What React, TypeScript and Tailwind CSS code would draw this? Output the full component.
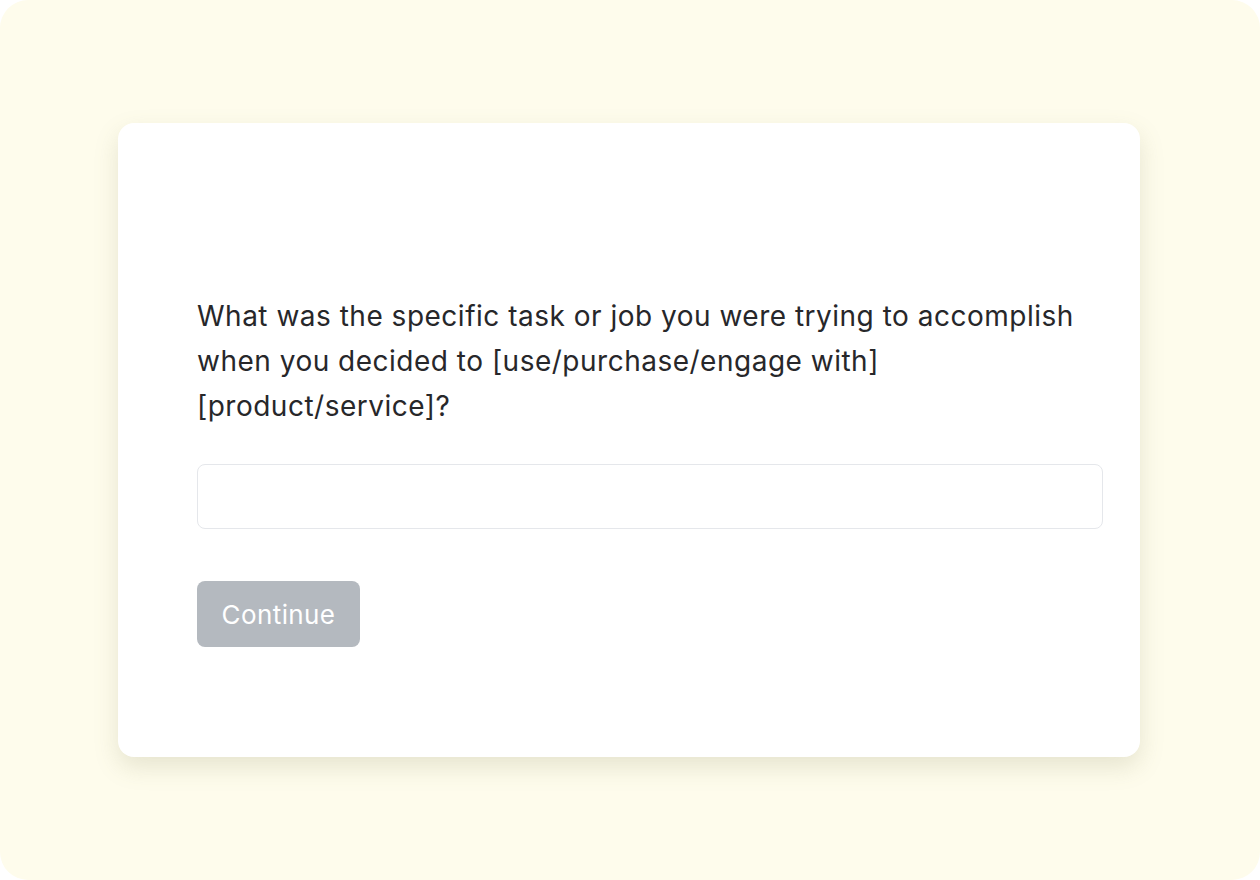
import React, { useState } from 'react';

// Survey question card
export default function App() {
  const [answer, setAnswer] = useState('');

  return (
    <div className="w-[1260px] h-[880px] bg-[#fefcec] rounded-[28px] overflow-hidden font-['Inter',sans-serif] pt-[123px] pl-[118px]">
      <div className="w-[1022px] h-[634px] bg-white rounded-[16px] shadow-[0_10px_24px_rgba(120,120,80,0.18)] pl-[79px] pt-[171px]">
        <p className="w-[905px] text-[28px] leading-[45px] tracking-[0.5px] text-[#27272a]">
          What was the specific task or job you were trying to accomplish when you decided to [use/purchase/engage with] [product/service]?
        </p>
        <input
          value={answer}
          onChange={(e) => setAnswer(e.target.value)}
          className="mt-[35px] block w-[906px] h-[65px] rounded-[8px] border border-[#e5e7eb] px-4 text-[22px] outline-none"
        />
        <button
          disabled={!answer}
          className="mt-[52px] w-[163px] h-[66px] rounded-[8px] bg-[#b4b9bf] text-white text-[26px] tracking-[0.4px]"
        >
          Continue
        </button>
      </div>
    </div>
  );
}
